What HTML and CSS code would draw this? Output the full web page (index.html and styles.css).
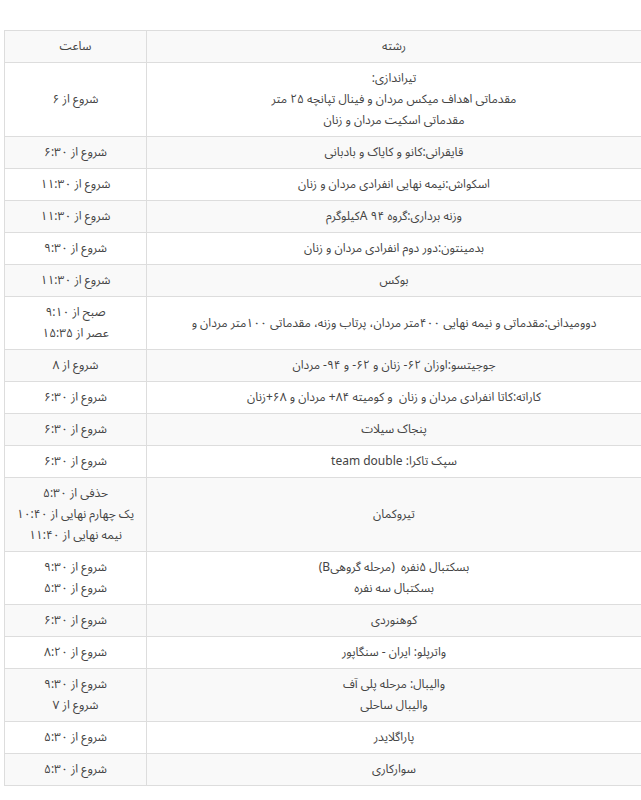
FILE: index.html
```html
<!DOCTYPE html>
<html lang="fa">
<head>
<meta charset="utf-8">
<link rel="stylesheet" href="styles.css">
</head>
<body>
<div class="wrap">
<table class="schedule">
<colgroup><col class="col-sport"><col class="col-time"></colgroup>
<tbody>
<tr><td class="sport">رشته</td><td class="time">ساعت</td></tr>
<tr><td class="sport">تیراندازی:<br>مقدماتی اهداف میکس مردان و فینال تپانچه ۲۵ متر<br>مقدماتی اسکیت مردان و زنان</td><td class="time">شروع از ۶</td></tr>
<tr><td class="sport">قایقرانی:کانو و کایاک و بادبانی</td><td class="time">شروع از ۶:۳۰</td></tr>
<tr><td class="sport">اسکواش:نیمه نهایی انفرادی مردان و زنان</td><td class="time">شروع از ۱۱:۳۰</td></tr>
<tr><td class="sport">وزنه برداری:گروه A ۹۴کیلوگرم</td><td class="time">شروع از ۱۱:۳۰</td></tr>
<tr><td class="sport">بدمینتون:دور دوم انفرادی مردان و زنان</td><td class="time">شروع از ۹:۳۰</td></tr>
<tr><td class="sport">بوکس</td><td class="time">شروع از ۱۱:۳۰</td></tr>
<tr><td class="sport">دوومیدانی:مقدماتی و نیمه نهایی ۴۰۰متر مردان، پرتاب وزنه، مقدماتی ۱۰۰متر مردان و</td><td class="time">صبح از ۹:۱۰<br>عصر از ۱۵:۳۵</td></tr>
<tr><td class="sport">جوجیتسو:اوزان ۶۲- زنان و ۶۲- و ۹۴- مردان</td><td class="time">شروع از ۸</td></tr>
<tr><td class="sport">کاراته:کاتا انفرادی مردان و زنان&nbsp; و کومیته ۸۴+ مردان و ۶۸+زنان</td><td class="time">شروع از ۶:۳۰</td></tr>
<tr><td class="sport">پنجاک سیلات</td><td class="time">شروع از ۶:۳۰</td></tr>
<tr><td class="sport">سپک تاکرا: team double</td><td class="time">شروع از ۶:۳۰</td></tr>
<tr><td class="sport">تیروکمان</td><td class="time">حذفی از ۵:۳۰<br>یک چهارم نهایی از ۱۰:۴۰<br>نیمه نهایی از ۱۱:۴۰</td></tr>
<tr><td class="sport">بسکتبال ۵نفره&nbsp; (مرحله گروهیB)<br>بسکتبال سه نفره</td><td class="time">شروع از ۹:۳۰<br>شروع از ۵:۳۰</td></tr>
<tr><td class="sport">کوهنوردی</td><td class="time">شروع از ۶:۳۰</td></tr>
<tr><td class="sport">واترپلو: ایران - سنگاپور</td><td class="time">شروع از ۸:۲۰</td></tr>
<tr><td class="sport">والیبال: مرحله پلی آف<br>والیبال ساحلی</td><td class="time">شروع از ۹:۳۰<br>شروع از ۷</td></tr>
<tr><td class="sport">پاراگلایدر</td><td class="time">شروع از ۵:۳۰</td></tr>
<tr><td class="sport">سوارکاری</td><td class="time">شروع از ۵:۳۰</td></tr>
</tbody>
</table>
</div>
</body>
</html>
```

FILE: styles.css
```css
html, body {
  margin: 0;
  padding: 0;
  overflow: hidden;
  background: #ffffff;
}

.wrap {
  padding: 30px 0 0 4px;
}

.schedule {
  direction: rtl;
  border-collapse: collapse;
  table-layout: fixed;
  width: 638px;
  font-family: "Noto Sans Arabic", "Vazirmatn", "DejaVu Sans", sans-serif;
  font-size: 12px;
  line-height: 21px;
  color: #444444;
}

.col-time {
  width: 142px;
}

.schedule td {
  border: 1px solid #dddddd;
  padding: 5px 6px;
  text-align: center;
  vertical-align: middle;
  white-space: nowrap;
}

.schedule tr:nth-child(odd) {
  background: #f9f9f9;
}
```
